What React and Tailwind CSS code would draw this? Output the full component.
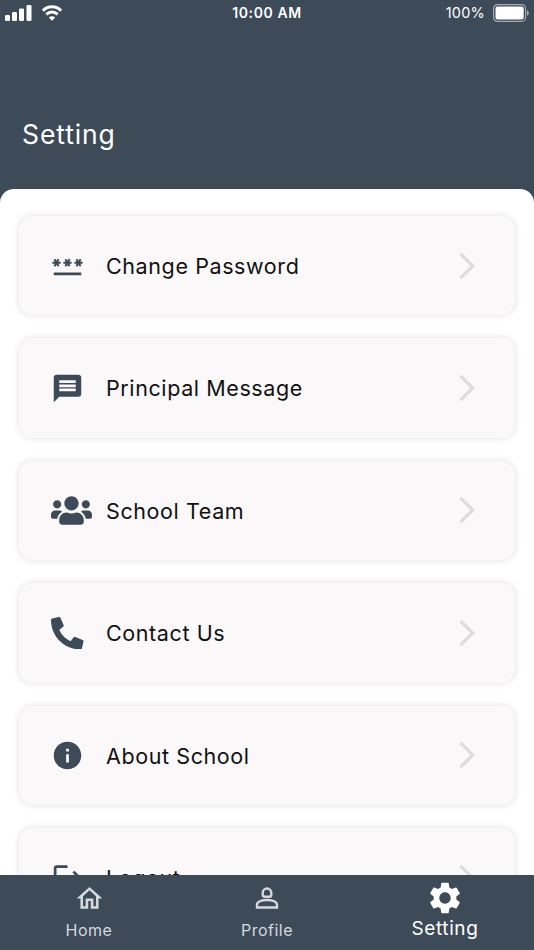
import {
  MdPassword,
  MdMessage,
  MdInfo,
  MdLogout,
  MdArrowForwardIos,
  MdOutlineHome,
  MdSettings,
} from 'react-icons/md'
import { FaUsers, FaPhoneAlt } from 'react-icons/fa'

const MENU = [
  { label: 'Change Password', icon: <MdPassword size={33} /> },
  { label: 'Principal Message', icon: <MdMessage size={33} /> },
  { label: 'School Team', icon: <FaUsers className="w-[41px] h-[33px]" /> },
  { label: 'Contact Us', icon: <FaPhoneAlt size={32.5} /> },
  { label: 'About School', icon: <MdInfo size={33} /> },
  { label: 'Logout', icon: <MdLogout size={33} /> },
]

function StatusBar() {
  return (
    <div className="grid grid-cols-3 items-center h-[26px] pl-[5px] pr-[5px] text-white">
      <div className="flex items-center gap-[10px]">
        <svg width="27" height="16" viewBox="0 0 27 16" fill="currentColor">
          <rect x="0" y="10" width="5" height="6" rx="1.2" />
          <rect x="7" y="7" width="5" height="9" rx="1.2" />
          <rect x="14" y="3.5" width="5" height="12.5" rx="1.2" />
          <rect x="21.5" y="0" width="5" height="16" rx="1.2" />
        </svg>
        <svg width="20" height="16" viewBox="0 0 20 16" fill="none" stroke="currentColor" strokeWidth="3">
          <path d="M0.9 5.6C6 0.4 14 0.4 19.1 5.6" />
          <path d="M4.3 9.4c3.3-3.2 8.1-3.2 11.4 0" />
          <path d="M10 15.8 6.8 12.5c1.9-1.7 4.5-1.7 6.4 0z" fill="currentColor" stroke="none" />
        </svg>
      </div>
      <span className="text-center text-[14px] font-semibold tracking-[0.6px] leading-none">10:00 AM</span>
      <div className="flex items-center justify-end gap-2">
        <span className="text-[14.5px] tracking-[0.2px] leading-none">100%</span>
        <svg width="36" height="18" viewBox="0 0 36 18">
          <rect x="0.6" y="0.6" width="32" height="16.8" rx="4" fill="none" stroke="#a3abb3" strokeWidth="1.2" />
          <rect x="2.5" y="2.5" width="28.2" height="13" rx="2" fill="#fff" />
          <path d="M34 6.2c2.3 1 2.3 4.6 0 5.6z" fill="#a3abb3" />
        </svg>
      </div>
    </div>
  )
}

function ProfileIcon() {
  return (
    <svg width="32" height="32" viewBox="0 0 32 32" fill="none" stroke="currentColor" strokeWidth="2.4">
      <path d="M11.7 12.4v-1.6a4.3 4.3 0 0 1 8.6 0v1.6c0 1.400-1 2.300-2.300 2.300h-4c-1.300 0-2.300-.9-2.300-2.300z" />
      <path d="M6 25.500v-2.800c0-3.400 5.500-4.700 10-4.700s10 1.300 10 4.700v2.800z" />
    </svg>
  )
}

function MenuCard({ icon, label }) {
  return (
    <button className="flex items-center shrink-0 w-full h-[99.4px] pr-8 pl-8 rounded-[14px] bg-[#faf8f9] shadow-[0_0_6px_1px_rgba(0,0,0,0.1)] text-left">
      <span className="flex w-[55px] shrink-0 text-[#3d4a57]">{icon}</span>
      <span className="flex-1 pt-px text-[21.5px] tracking-[0.6px] text-[#111]">{label}</span>
      <MdArrowForwardIos size={32} className="text-[#dddcdd]" />
    </button>
  )
}

function NavItem({ icon, label, active }) {
  return (
    <button className={`flex flex-col items-center ${active ? 'text-white pt-[7px]' : 'text-[#d5d9de] pt-[7px]'}`}>
      <span className="flex items-center h-8">{icon}</span>
      <span className={active ? 'text-[19px] leading-6 tracking-[0.6px] mt-[3px]' : 'text-[16px] leading-5 tracking-[0.5px] mt-[6px]'}>
        {label}
      </span>
    </button>
  )
}

export default function App() {
  return (
    <div className="flex flex-col w-[534px] h-[950px] overflow-hidden bg-[#3d4a57] font-['Inter',sans-serif]">
      <StatusBar />
      <header className="h-[163px] shrink-0 px-[22px] pt-[90px]">
        <h1 className="text-[26.5px] leading-9 tracking-[0.9px] text-white">Setting</h1>
      </header>
      <main className="flex flex-col flex-1 min-h-0 gap-[23px] overflow-hidden px-[19px] pt-[27px] bg-white rounded-t-[14px]">
        {MENU.map(item => <MenuCard key={item.label} {...item} />)}
      </main>
      <nav className="grid grid-cols-3 h-[75px] shrink-0 bg-[#3d4a57]">
        <NavItem icon={<MdOutlineHome size={31} />} label="Home" />
        <NavItem icon={<ProfileIcon />} label="Profile" />
        <NavItem icon={<MdSettings size={38} />} label="Setting" active />
      </nav>
    </div>
  )
}
